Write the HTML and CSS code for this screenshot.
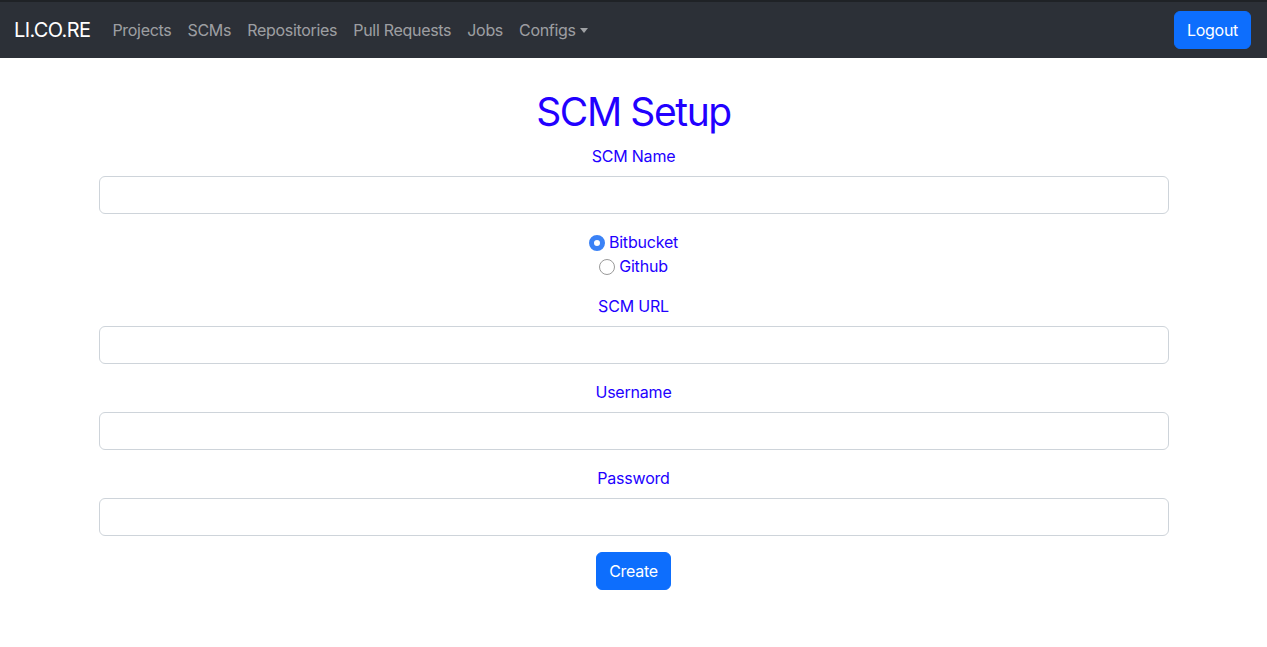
FILE: index.html
```html
<!DOCTYPE html>
<html lang="en">
<head>
<meta charset="utf-8">
<title>SCM Setup</title>
<link rel="stylesheet" href="styles.css">
</head>
<body>
<nav class="navbar">
  <div class="nav-left">
    <a class="brand" href="#">LI.CO.RE</a>
    <ul class="nav-links">
      <li><a href="#">Projects</a></li>
      <li><a href="#">SCMs</a></li>
      <li><a href="#">Repositories</a></li>
      <li><a href="#">Pull Requests</a></li>
      <li><a href="#">Jobs</a></li>
      <li><a href="#" class="dropdown">Configs</a></li>
    </ul>
  </div>
  <button class="btn btn-primary" type="button">Logout</button>
</nav>
<main class="page">
  <h1 class="title">SCM Setup</h1>
  <form class="form">
    <div class="group">
      <label class="label" for="name">SCM Name</label>
      <input class="input" id="name" type="text">
    </div>
    <div class="group radios">
      <label class="radio-line"><input class="radio" type="radio" name="scm" checked>Bitbucket</label>
      <label class="radio-line"><input class="radio" type="radio" name="scm">Github</label>
    </div>
    <div class="group">
      <label class="label" for="url">SCM URL</label>
      <input class="input" id="url" type="text">
    </div>
    <div class="group">
      <label class="label" for="user">Username</label>
      <input class="input" id="user" type="text">
    </div>
    <div class="group">
      <label class="label" for="pass">Password</label>
      <input class="input" id="pass" type="password">
    </div>
    <div class="actions">
      <button class="btn btn-primary" type="submit">Create</button>
    </div>
  </form>
</main>
</body>
</html>
```
FILE: styles.css
```css
* { box-sizing: border-box; }
html, body { margin: 0; padding: 0; }
body {
  font-family: Inter, "Noto Sans", sans-serif;
  font-size: 16px;
  line-height: 24px;
  color: #212529;
  background: #fff;
}
.navbar {
  display: flex;
  align-items: center;
  justify-content: space-between;
  height: 58px;
  padding: 0 16px 0 14px;
  background: #2c3037;
  border-top: 2px solid #1f2226;
}
.nav-left { display: flex; align-items: center; }
.brand {
  color: #fff;
  font-size: 20px;
  text-decoration: none;
  margin-right: 14px;
  letter-spacing: -0.6px;
}
.nav-links {
  display: flex;
  list-style: none;
  margin: 0;
  padding: 0;
}
.nav-links a {
  display: block;
  padding: 8px;
  color: rgba(255,255,255,0.55);
  text-decoration: none;
  letter-spacing: -0.3px;
}
.dropdown::after {
  content: "";
  display: inline-block;
  margin-left: 4px;
  vertical-align: 3px;
  border-top: 5px solid;
  border-left: 4.5px solid transparent;
  border-right: 4.5px solid transparent;
}
.btn {
  font-family: inherit;
  font-size: 16px;
  line-height: 24px;
  padding: 6px 12px;
  border-radius: 6px;
  border: 1px solid transparent;
  letter-spacing: -0.3px;
}
.btn-primary { background: #0d6efd; border-color: #0d6efd; color: #fff; }
.page {
  width: 1070px;
  margin: 0 auto;
  padding-top: 30px;
  text-align: center;
  color: #2200ff;
}
.title {
  font-size: 39px;
  font-weight: 400;
  line-height: 48px;
  margin: 0 0 8px;
  letter-spacing: -1.4px;
}
.group { margin-bottom: 16px; }
.label {
  display: block;
  margin-bottom: 8px;
  letter-spacing: -0.2px;
}
.input {
  display: block;
  width: 100%;
  height: 38px;
  border: 1px solid #ced4da;
  border-radius: 6px;
  font: inherit;
  padding: 6px 12px;
}
.radios { display: flex; flex-direction: column; align-items: center; }
.radio-line {
  display: flex;
  align-items: center;
  letter-spacing: -0.2px;
}
.radio {
  appearance: none;
  -webkit-appearance: none;
  width: 16px;
  height: 16px;
  margin: 2px 4px 0 0;
  border: 1px solid #9a9a9a;
  border-radius: 50%;
  background: #fff;
}
.radio:checked {
  border: 5px solid #3b82f6;
  background: #fff;
}
.actions { display: flex; justify-content: center; }
```
